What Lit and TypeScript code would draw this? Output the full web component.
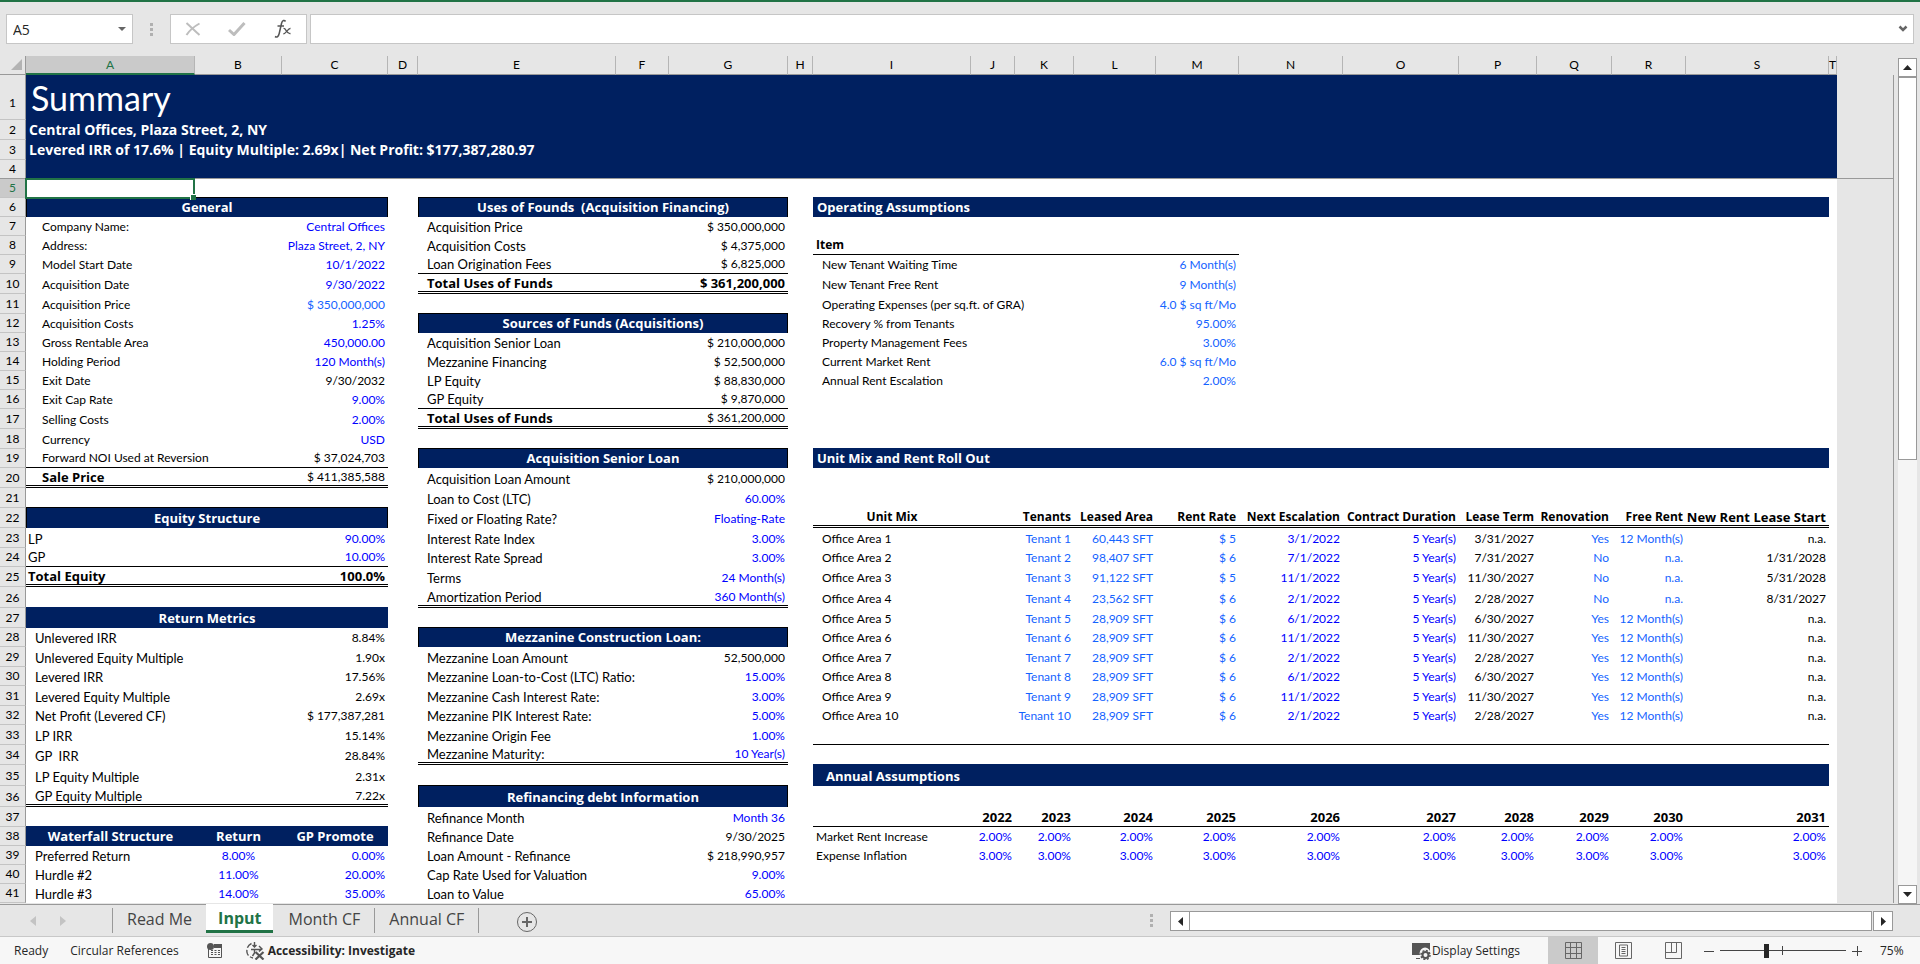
import { LitElement, html, css, svg, nothing } from "lit";
import { customElement, state } from "lit/decorators.js";
import { classMap } from "lit/directives/class-map.js";
import { styleMap } from "lit/directives/style-map.js";

type Cell = { text: string; cls: string; span: number };

const COLUMNS = "ABCDEFGHIJKLMNOPQRST".split("");
const WIDTHS = [169, 87, 106, 30, 198, 53, 119, 25, 158, 44, 59, 82, 83, 104, 116, 78, 75, 74, 143, 8];
const HEIGHTS = [
  45, 20, 20, 19, 19, 19, 19, 19, 19, 20, 20, 19, 19, 19, 19, 19, 20, 20, 19, 20, 20,
  20, 20, 19, 20, 21, 20, 19, 20, 19, 20, 19, 20, 20, 21, 21, 20, 19, 19, 19, 19,
];

const cells = new Map<string, Cell>();
const put = (ref: string, text: string, cls = "", span = 1) => cells.set(ref, { text, cls, span });

/* Title block, frozen above the scrolling rows */
put("A1", "Summary", "title", 20);
put("A2", "Central Offices, Plaza Street, 2, NY", "sub", 20);
put("A3", "Levered IRR of 17.6% | Equity Multiple: 2.69x| Net Profit: $177,387,280.97", "sub", 20);
put("A4", "", "sub freeze", 20);

/* Label and value pairs stacked down two columns */
const pairs = (labelCol: string, valueCol: string, first: number, labelCls: string, rows: [string, string, string?][]) =>
  rows.forEach(([label, value, cls = ""], i) => {
    put(`${labelCol}${first + i}`, label, `${labelCls} ${cls.includes("total") ? "strong" : ""}`);
    put(`${valueCol}${first + i}`, value, `num ${cls}`);
  });

put("A6", "General", "head box", 3);
pairs("A", "C", 7, "in16", [
  ["Company Name:", "Central Offices", "blue"],
  ["Address:", "Plaza Street, 2, NY", "blue"],
  ["Model Start Date", "10/1/2022", "blue"],
  ["Acquisition Date", "9/30/2022", "blue"],
  ["Acquisition Price", "$ 350,000,000", "sky"],
  ["Acquisition Costs", "1.25%", "blue"],
  ["Gross Rentable Area", "450,000.00", "blue"],
  ["Holding Period", "120 Month(s)", "blue"],
  ["Exit Date", "9/30/2032"],
  ["Exit Cap Rate", "9.00%", "blue"],
  ["Selling Costs", "2.00%", "blue"],
  ["Currency", "USD", "blue"],
  ["Forward NOI Used at Reversion", "$ 37,024,703"],
]);
put("A20", "Sale Price", "in16 strong");
put("C20", "$ 411,385,588", "num");

put("A22", "Equity Structure", "head box", 3);
pairs("A", "C", 23, "label in2", [
  ["LP", "90.00%", "blue"],
  ["GP", "10.00%", "blue"],
  ["Total Equity", "100.0%", "total strong"],
]);

put("A27", "Return Metrics", "head", 3);
pairs("A", "C", 28, "label in9", [
  ["Unlevered IRR", "8.84%"],
  ["Unlevered Equity Multiple", "1.90x"],
  ["Levered IRR", "17.56%"],
  ["Levered Equity Multiple", "2.69x"],
  ["Net Profit (Levered CF)", "$ 177,387,281"],
  ["LP IRR", "15.14%"],
  ["GP\u00a0 IRR", "28.84%"],
  ["LP Equity Multiple", "2.31x"],
  ["GP Equity Multiple", "7.22x"],
]);

put("A38", "Waterfall Structure", "head");
put("B38", "Return", "head");
put("C38", "GP Promote", "head");
pairs("A", "C", 39, "label in9", [
  ["Preferred Return", "0.00%", "blue"],
  ["Hurdle #2", "20.00%", "blue"],
  ["Hurdle #3", "35.00%", "blue"],
]);
["8.00%", "11.00%", "14.00%"].forEach((v, i) => put(`B${39 + i}`, v, "mid blue"));

put("E6", "Uses of Founds\u00a0 (Acquisition Financing)", "head box", 3);
pairs("E", "G", 7, "label in9", [
  ["Acquisition Price", "$ 350,000,000"],
  ["Acquisition Costs", "$ 4,375,000"],
  ["Loan Origination Fees", "$ 6,825,000"],
  ["Total Uses of Funds", "$ 361,200,000", "total strong"],
]);
put("E12", "Sources of Funds (Acquisitions)", "head box", 3);
pairs("E", "G", 13, "label in9", [
  ["Acquisition Senior Loan", "$ 210,000,000"],
  ["Mezzanine Financing", "$ 52,500,000"],
  ["LP Equity", "$ 88,830,000"],
  ["GP Equity", "$ 9,870,000"],
  ["Total Uses of Funds", "$ 361,200,000", "total"],
]);
put("E19", "Acquisition Senior Loan", "head box", 3);
pairs("E", "G", 20, "label in9", [
  ["Acquisition Loan Amount", "$ 210,000,000"],
  ["Loan to Cost (LTC)", "60.00%", "blue"],
  ["Fixed or Floating Rate?", "Floating-Rate", "blue"],
  ["Interest Rate Index", "3.00%", "blue"],
  ["Interest Rate Spread", "3.00%", "blue"],
  ["Terms", "24 Month(s)", "blue"],
  ["Amortization Period", "360 Month(s)", "blue"],
]);
put("E28", "Mezzanine Construction Loan:", "head box", 3);
pairs("E", "G", 29, "label in9", [
  ["Mezzanine Loan Amount", "52,500,000"],
  ["Mezzanine Loan-to-Cost (LTC) Ratio:", "15.00%", "blue"],
  ["Mezzanine Cash Interest Rate:", "3.00%", "blue"],
  ["Mezzanine PIK Interest Rate:", "5.00%", "blue"],
  ["Mezzanine Origin Fee", "1.00%", "blue"],
  ["Mezzanine Maturity:", "10 Year(s)", "blue"],
]);
put("E36", "Refinancing debt Information", "head box", 3);
pairs("E", "G", 37, "label in9", [
  ["Refinance Month", "Month 36", "blue"],
  ["Refinance Date", "9/30/2025"],
  ["Loan Amount - Refinance", "$ 218,990,957"],
  ["Cap Rate Used for Valuation", "9.00%", "blue"],
  ["Loan to Value", "65.00%", "blue"],
]);

put("I6", "Operating Assumptions", "head start", 11);
put("I8", "Item", "in3 strong small");
pairs("I", "M", 9, "in9", [
  ["New Tenant Waiting Time", "6 Month(s)", "sky"],
  ["New Tenant Free Rent", "9 Month(s)", "sky"],
  ["Operating Expenses (per sq.ft. of GRA)", "4.0 $ sq ft/Mo", "sky"],
  ["Recovery % from Tenants", "95.00%", "sky"],
  ["Property Management Fees", "3.00%", "sky"],
  ["Current Market Rent", "6.0 $ sq ft/Mo", "sky"],
  ["Annual Rent Escalation", "2.00%", "sky"],
]);

put("I19", "Unit Mix and Rent Roll Out", "head start", 11);
put("I22", "Unit Mix", "mid strong small");
["Tenants", "Leased Area", "Rent Rate", "Next Escalation", "Contract Duration", "Lease Term", "Renovation", "Free Rent"]
  .forEach((t, i) => put(`${"KLMNOPQR"[i]}22`, t, "num strong small"));
put("S22", "New Rent Lease Start", "num strong");

const rentRoll: string[][] = [
  ["60,443", "5", "3/1/2022", "3/31/2027", "Yes", "n.a."],
  ["98,407", "6", "7/1/2022", "7/31/2027", "No", "1/31/2028"],
  ["91,122", "5", "11/1/2022", "11/30/2027", "No", "5/31/2028"],
  ["23,562", "6", "2/1/2022", "2/28/2027", "No", "8/31/2027"],
  ["28,909", "6", "6/1/2022", "6/30/2027", "Yes", "n.a."],
  ["28,909", "6", "11/1/2022", "11/30/2027", "Yes", "n.a."],
  ["28,909", "6", "2/1/2022", "2/28/2027", "Yes", "n.a."],
  ["28,909", "6", "6/1/2022", "6/30/2027", "Yes", "n.a."],
  ["28,909", "6", "11/1/2022", "11/30/2027", "Yes", "n.a."],
  ["28,909", "6", "2/1/2022", "2/28/2027", "Yes", "n.a."],
];
rentRoll.forEach(([area, rate, escalation, term, renew, start], i) => {
  const r = 23 + i;
  put(`I${r}`, `Office Area ${i + 1}`, "in9");
  put(`K${r}`, `Tenant ${i + 1}`, "num sky");
  put(`L${r}`, `${area} SFT`, "num sky");
  put(`M${r}`, `$ ${rate}`, "num sky");
  put(`N${r}`, escalation, "num blue");
  put(`O${r}`, "5 Year(s)", "num blue");
  put(`P${r}`, term, "num");
  put(`Q${r}`, renew, "num sky");
  put(`R${r}`, renew === "Yes" ? "12 Month(s)" : "n.a.", "num sky");
  put(`S${r}`, start, "num");
});

put("I35", "Annual Assumptions", "head start in13", 11);
put("I38", "Market Rent Increase", "in3");
put("I39", "Expense Inflation", "in3");
"JKLMNOPQRS".split("").forEach((c, i) => {
  put(`${c}37`, String(2022 + i), "num strong");
  put(`${c}38`, "2.00%", "num blue");
  put(`${c}39`, "3.00%", "num blue");
});

/* Rules drawn under a run of cells: row, first column, last column, kind */
const RULES: [number, string, string, string][] = [
  [19, "A", "C", "line"], [20, "A", "C", "double"], [24, "A", "C", "line"], [25, "A", "C", "double"], [36, "A", "C", "double"],
  [9, "E", "G", "line"], [10, "E", "G", "double"], [16, "E", "G", "line"], [17, "E", "G", "double"],
  [26, "E", "G", "double"], [34, "E", "G", "double"],
  [8, "I", "M", "line"], [22, "I", "S", "double"], [33, "I", "S", "line"], [37, "I", "S", "line"],
];
const ruleFor = (row: number, col: string) =>
  RULES.find(([r, a, b]) => r === row && col >= a && col <= b)?.[3] ?? "";

const SHEETS = ["Read Me", "Input", "Month CF", "Annual CF"];

const arrow = (points: string) => svg`<svg width="9" height="9" viewBox="0 0 9 9"><polygon points=${points} fill="#262626"/></svg>`;

@customElement("sheet-grid")
export class SheetGrid extends LitElement {
  static styles = css`
    :host { display: block; overflow: hidden; position: relative; }
    table { width: 100%; table-layout: fixed; border-collapse: separate; border-spacing: 0; color: #000; }
    td, th { box-sizing: border-box; padding: 0; white-space: nowrap; vertical-align: bottom; font-size: 12px; line-height: 18px; font-weight: 400; }
    td { background: #fff; text-align: left; }
    thead th { height: 19px; background: #e6e6e6; border-bottom: 1px solid #999; border-right: 1px solid #b5b5b5; text-align: center; }
    thead th.picked { background: #cacaca; color: #217346; border-bottom: 2px solid #217346; line-height: 17px; }
    thead th.corner { border-right-color: #999; text-align: right; line-height: 0; padding: 0 3px 4px 0; }
    thead th.rest { border-color: transparent; border-bottom-color: #e6e6e6; }
    tbody th { background: #e6e6e6; border-bottom: 1px solid #c4c4c4; border-right: 1px solid #999; text-align: center; }
    tbody th.picked { background: #cacaca; color: #217346; }
    tbody th.tall { padding-bottom: 7px; }
    tbody th.edge, td.freeze { border-bottom: 1px solid #999; }
    td.rest { background: #e6e6e6; border-right: 1px solid #999; }
    td.title { background: #002060; color: #fff; font-size: 34px; line-height: 44px; padding-left: 5px; }
    td.label { font-size: 13px; }
    td.sub, td.head, td.strong { font-family: "Open Sans", "Noto Sans", sans-serif; font-weight: 700; font-size: 13px; }
    td.sub { background: #002060; color: #fff; font-size: 14px; padding: 0 0 1px 3px; }
    td.sub.freeze { padding-bottom: 0; }
    td.head { background: #002060; color: #fff; text-align: center; box-shadow: 0 -1px 0 #002060; padding-bottom: 1px; }
    td.box { border-right: 1px solid #000; border-left: 1px solid #000; box-shadow: 0 -1px 0 #000; }
    td.start { text-align: left; padding-left: 4px; }
    td.num { text-align: right; padding-right: 3px; }
    td.mid { text-align: center; }
    td.strong.small { font-size: 12px; }
    td.blue { color: #0000ff; }
    td.sky { color: #1463ff; }
    td.in2 { padding-left: 2px; }
    td.in3 { padding-left: 3px; }
    td.in9 { padding-left: 9px; }
    td.in13 { padding-left: 13px; }
    td.in16 { padding-left: 16px; }
    td.line { border-bottom: 1px solid #000; }
    td.double { border-bottom: 3px double #000; line-height: 16px; }
    td.cursor { position: relative; }
    .outline { position: absolute; inset: -1px 0 -1px -1px; border: 2px solid #217346; }
    .handle { position: absolute; right: -3px; bottom: -3px; width: 5px; height: 5px; background: #217346; border: 1px solid #fff; border-width: 1px 0 0 1px; }
  `;

  private row(r: number) {
    const out = [];
    for (let c = 0; c < COLUMNS.length; ) {
      const col = COLUMNS[c];
      const cell = cells.get(`${col}${r}`);
      const cls = `${cell?.cls ?? ""} ${ruleFor(r, col)} ${r === 5 && col === "A" ? "cursor" : ""}`;
      const inner = r === 5 && col === "A" ? html`<span class="outline"><span class="handle"></span></span>` : cell?.text ?? nothing;
      out.push(html`<td class=${cls} colspan=${cell?.span ?? 1}>${inner}</td>`);
      c += cell?.span ?? 1;
    }
    return out;
  }

  render() {
    return html`
      <table>
        <colgroup>
          <col style=${styleMap({ width: "26px" })} />
          ${WIDTHS.map((w) => html`<col style=${styleMap({ width: `${w}px` })} />`)}
          <col />
        </colgroup>
        <thead>
          <tr>
            <th class="corner"><svg width="11" height="11" viewBox="0 0 11 11"><polygon points="11,0 11,11 0,11" fill="#b3b3b3" /></svg></th>
            ${COLUMNS.map((c) => html`<th scope="col" class=${classMap({ picked: c === "A" })}>${c}</th>`)}
            <th class="rest"></th>
          </tr>
        </thead>
        <tbody>
          ${HEIGHTS.map((h, i) => html`
            <tr style=${styleMap({ height: `${h}px` })}>
              <th scope="row" class=${classMap({ picked: i === 4, tall: i === 0, edge: i === 3 })}>${i + 1}</th>
              ${this.row(i + 1)}
              <td class=${classMap({ rest: true, freeze: i === 3 })}></td>
            </tr>`)}
        </tbody>
      </table>`;
  }
}

@customElement("app-root")
export class AppRoot extends LitElement {
  @state() private sheet = "Input";

  static styles = css`
    :host { display: flex; flex-direction: column; height: 100vh; overflow: hidden; background: #e6e6e6; color: #262626; font-family: "Open Sans", "Noto Sans", sans-serif; font-size: 12px; }
    button { font: inherit; color: inherit; background: none; border: 0; padding: 0; margin: 0; display: flex; align-items: center; justify-content: center; }
    input { font: inherit; color: inherit; border: 0; padding: 0; margin: 0; outline: 0; background: none; min-width: 0; }
    .formula { display: flex; border-top: 2px solid #217346; padding: 12px 6px; height: 30px; }
    .box { display: flex; align-items: center; box-sizing: border-box; background: #fff; border: 1px solid #c6c6c6; }
    .name { width: 127px; padding: 0 6px; }
    .name input { flex: 1; font-size: 14px; }
    .dots { display: flex; flex-direction: column; justify-content: center; align-items: center; gap: 2px; }
    .dots i { width: 3px; height: 3px; background: #b0b0b0; }
    .formula .dots { width: 37px; }
    .actions { width: 137px; margin-right: 3px; justify-content: space-around; }
    .entry { flex: 1; padding: 0 5px; }
    .entry input { flex: 1; }
    .work { flex: 1; display: flex; min-height: 0; border-bottom: 1px solid #999; }
    sheet-grid { flex: 1; min-width: 0; font-family: Lato, "Open Sans", sans-serif; }
    .vbar { display: flex; flex-direction: column; width: 19px; margin: 2px 3px 0 4px; background: #f5f5f5; }
    .vbar button { height: 19px; }
    .vbar button, .hbar button, .thumb { box-sizing: border-box; background: #fff; border: 1px solid #999; }
    .vbar .thumb { height: 383px; }
    .space { flex: 1; }
    .tabs { display: flex; height: 31px; box-sizing: border-box; }
    .steps { width: 112px; display: flex; align-items: center; gap: 24px; padding-left: 29px; box-sizing: border-box; }
    .sheets { display: flex; }
    .tab { height: 25px; padding: 0 14px 4px; margin-top: 3px; border-left: 1px solid #999; font-size: 16px; color: #444; }
    .tab.on { height: 29px; margin-top: -1px; background: #fff; border-bottom: 3px solid #217346; border-left: 0; color: #217346; font-weight: 700; padding: 1px 12px 0; position: relative; }
    .tab.on + .tab { border-left-color: transparent; }
    .tab:last-child { border-right: 1px solid #999; }
    .add { margin-left: 37px; }
    .tabs .dots { width: 19px; margin-right: 9px; }
    .hbar { display: flex; width: 723px; height: 20px; margin: 6px 27px 0 0; }
    .hbar button { width: 20px; }
    .hbar .thumb { flex: 1; margin: 0 1px 0 -1px; }
    .status { display: flex; align-items: center; height: 28px; box-sizing: border-box; border-top: 1px solid #c8c8c8; background: #f7f7f7; padding: 0 12px 0 14px; }
    .status .gap { margin-left: 22px; }
    .status .wide { margin-left: 28px; }
    .status b { font-weight: 700; margin-left: 2px; }
    .views { display: flex; align-self: stretch; margin-left: 28px; }
    .views button { width: 50px; }
    .views button.on { background: #cacaca; }
    .zoom { display: flex; align-items: center; gap: 6px; margin-left: 6px; }
    .zoom input { appearance: none; width: 126px; height: 14px; background: linear-gradient(#444, #444) 62px 50% / 1px 9px no-repeat, linear-gradient(#444, #444) 0 50% / 100% 1px no-repeat; }
    .zoom input::-webkit-slider-thumb { appearance: none; width: 5px; height: 14px; background: #262626; }
    .zoom output { margin-left: 12px; width: 28px; }
  `;

  render() {
    return html`
      <div class="formula">
        <div class="box name">
          <input aria-label="Name box" value="A5" />
          <button aria-label="Open names"><svg width="8" height="4" viewBox="0 0 8 4"><polygon points="0,0 8,0 4,4" fill="#666" /></svg></button>
        </div>
        <div class="dots"><i></i><i></i><i></i></div>
        <div class="box actions">
          <button aria-label="Cancel"><svg width="16" height="14" viewBox="0 0 16 14"><path d="M1.500 1C5 4 11 10 14.500 13M14.500 1.500C10 4 4 9 1.500 13" fill="none" stroke="#bdbdbd" stroke-width="2" /></svg></button>
          <button aria-label="Enter"><svg width="18" height="14" viewBox="0 0 18 14"><path d="M1 8L6 12.500L16.500 1" fill="none" stroke="#bdbdbd" stroke-width="3" /></svg></button>
          <button aria-label="Insert function"><svg width="18" height="20" viewBox="0 0 18 20" fill="none" stroke="#555"><path d="M11.500 2.500C10.500 .8 8.300 1 7.500 4.500L5.200 14.500C4.600 17.300 3 18.800 1 17.500M3.500 7H10" stroke-width="1.500" /><path d="M9.500 9.500C12 8.500 12.500 15.500 16.500 14.500M16.500 9.500C14 9 12 14.800 9.300 14.800" stroke-width="1.300" /></svg></button>
        </div>
        <div class="box entry">
          <input aria-label="Formula" />
          <button aria-label="Expand formula bar"><svg width="10" height="8" viewBox="0 0 10 8"><path d="M1.500 1.500L5 5L8.500 1.500" fill="none" stroke="#666" stroke-width="2.500" /></svg></button>
        </div>
      </div>

      <div class="work">
        <sheet-grid></sheet-grid>
        <div class="vbar">
          <button aria-label="Scroll up">${arrow("0,7 9,7 4.500,2")}</button>
          <div class="thumb"></div>
          <div class="space"></div>
          <button aria-label="Scroll down">${arrow("0,2 9,2 4.500,7")}</button>
        </div>
      </div>

      <div class="tabs">
        <div class="steps">
          <button aria-label="Previous sheet"><svg width="7" height="10" viewBox="0 0 7 10"><polygon points="7,0 7,10 1,5" fill="#c3c3c3" /></svg></button>
          <button aria-label="Next sheet"><svg width="7" height="10" viewBox="0 0 7 10"><polygon points="0,0 0,10 6,5" fill="#c3c3c3" /></svg></button>
        </div>
        <nav class="sheets">
          ${SHEETS.map((s) => html`<button class=${classMap({ tab: true, on: s === this.sheet })} @click=${() => (this.sheet = s)}>${s}</button>`)}
        </nav>
        <button class="add" aria-label="New sheet"><svg width="22" height="30" viewBox="0 0 22 30" fill="none" stroke="#666"><circle cx="11" cy="16" r="9.500" /><path d="M11 11V21M6 16H16" stroke-width="2" /></svg></button>
        <div class="space"></div>
        <div class="dots"><i></i><i></i><i></i></div>
        <div class="hbar">
          <button aria-label="Scroll left">${arrow("7,0 7,9 2,4.500")}</button>
          <div class="thumb"></div>
          <button aria-label="Scroll right">${arrow("2,0 2,9 7,4.500")}</button>
        </div>
      </div>

      <div class="status">
        <span>Ready</span>
        <span class="gap">Circular References</span>
        <svg class="wide" width="16" height="16" viewBox="0 0 16 16"><path d="M1.500 6V14.500H14.500V3" fill="none" stroke="#555" /><rect x="7" y="1" width="8" height="4" fill="#555" /><circle cx="3.500" cy="3.500" r="3.500" fill="#555" /><path d="M4 7.500H13M4 9.500H13M4 11.500H13" stroke="#555" stroke-dasharray="2 1.500" /></svg>
        <svg class="gap" width="21" height="18" viewBox="0 0 21 18" fill="none" stroke="#555"><path d="M6.500 1.500A8 8 0 0 0 2.500 12A8 8 0 0 0 8 16" stroke-width="1.400" stroke-dasharray="6 2" /><path d="M9.500 0V4.500M7.500 3L9.500 5L11.500 3M6 7.500H16M14 4L17 7L14 9.500M9.500 7.500V11L7.500 14" stroke-width="1.400" /><path d="M10.500 10L18.500 17.500M18.500 10L10.500 17.500" stroke-width="2.200" /></svg>
        <b>Accessibility: Investigate</b>
        <div class="space"></div>
        <svg width="21" height="18" viewBox="0 0 21 18"><path d="M1 1H19V9A5 5 0 0 0 9 13H1ZM5 16H9V17H5Z" fill="#555" /><circle cx="14.500" cy="13" r="3" fill="none" stroke="#555" stroke-width="2" /><circle cx="14.500" cy="13" r="4.500" fill="none" stroke="#555" stroke-width="1.500" stroke-dasharray="2 1.500" /></svg>
        <span>Display Settings</span>
        <div class="views">
          <button class="on" aria-label="Normal view"><svg width="17" height="17" viewBox="0 0 17 17" fill="none" stroke="#666"><path d="M.5 .5H16.500V16.500H.5ZM5.500 .5V16.500M11.500 .5V16.500M.5 5.500H16.500M.5 11.500H16.500" /></svg></button>
          <button aria-label="Page layout view"><svg width="17" height="17" viewBox="0 0 17 17" fill="none" stroke="#666"><path d="M.5 .5H16.500V16.500H.5ZM4.500 3H12.500V14H4.500ZM6.500 5.500H10.500M6.500 7.500H10.500M6.500 9.500H10.500M6.500 11.500H10.500" /></svg></button>
          <button aria-label="Page break view"><svg width="17" height="17" viewBox="0 0 17 17" fill="none" stroke="#666"><path d="M.5 .5H16.500V16.500H.5ZM6.500 .5V10.500M11.500 .5V10.500M.5 10.500H11.500" /></svg></button>
        </div>
        <div class="zoom">
          <button aria-label="Zoom out"><svg width="10" height="10" viewBox="0 0 10 10"><path d="M0 5.500H10" stroke="#444" /></svg></button>
          <input type="range" aria-label="Zoom" min="0" max="100" value="36" />
          <button aria-label="Zoom in"><svg width="10" height="10" viewBox="0 0 10 10"><path d="M0 5.500H10M5.500 0V10" stroke="#444" /></svg></button>
          <output>75%</output>
        </div>
      </div>`;
  }
}
